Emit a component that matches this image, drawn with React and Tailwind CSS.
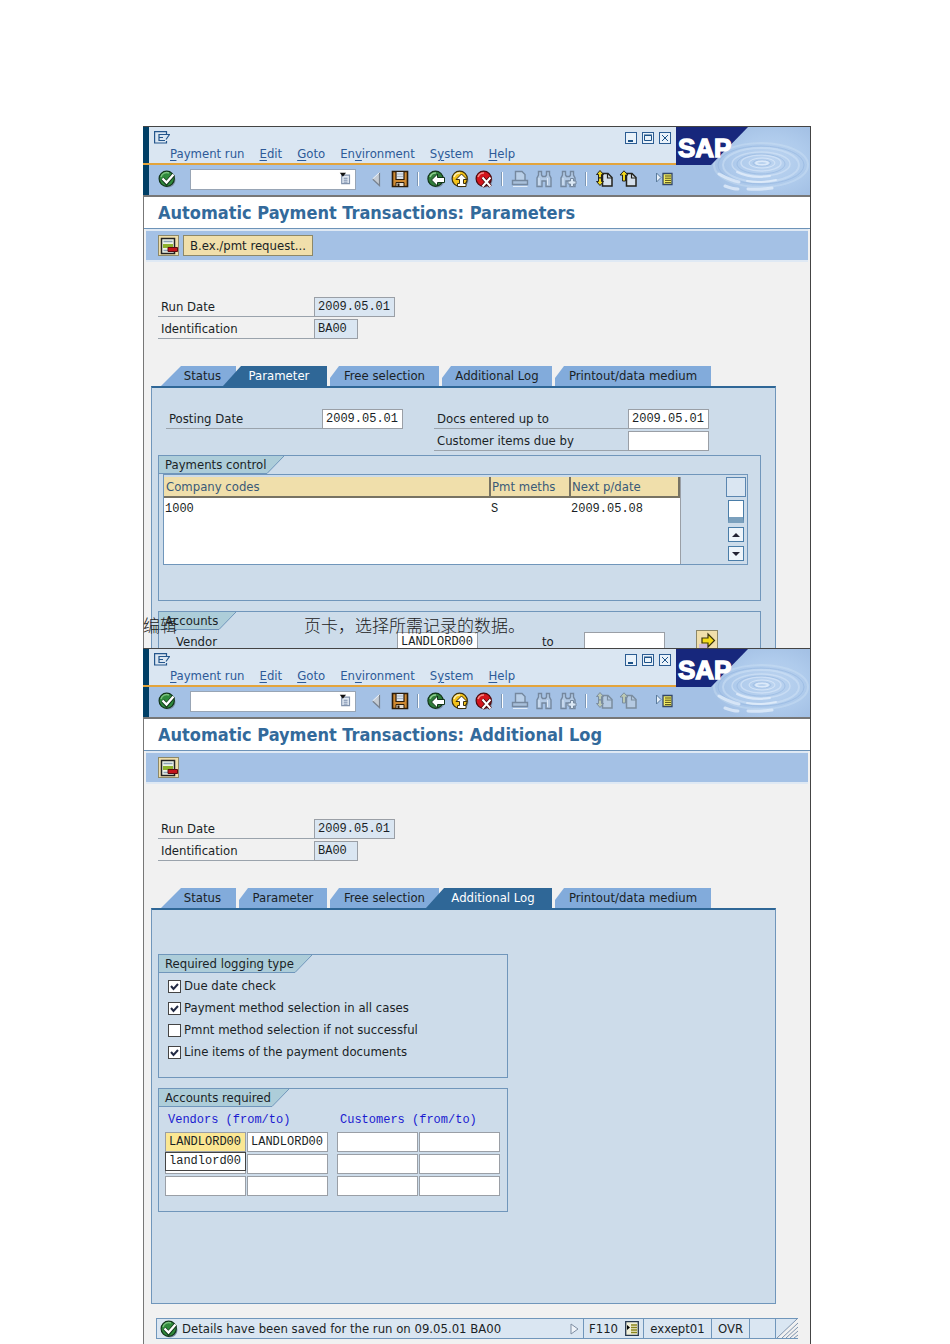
import { useState } from 'react';

const sans = 'font-["DejaVu_Sans_Condensed","DejaVu_Sans",sans-serif]';
const mono = 'font-["Liberation_Mono",monospace] text-[12px]';

const MENUS = [
    ['', 'P', 'ayment run'],
    ['', 'E', 'dit'],
    ['', 'G', 'oto'],
    ['En', 'v', 'ironment'],
    ['S', 'y', 'stem'],
    ['', 'H', 'elp'],
];

const TABS = [
    { name: 'Status', width: 'w-[75px]', activeWidth: 'w-[75px]' },
    { name: 'Parameter', width: 'w-[88px]', activeWidth: 'w-[104px]' },
    { name: 'Free selection', width: 'w-[109px]', activeWidth: 'w-[125px]' },
    { name: 'Additional Log', width: 'w-[110px]', activeWidth: 'w-[126px]' },
    { name: 'Printout/data medium', width: 'w-[156px]', activeWidth: 'w-[172px]' },
];

const Svg = ({ size = 18, className = '', children }) => (
    <svg width={size} height={size} viewBox="0 0 18 18" fill="none" className={`shrink-0 ${className}`} aria-hidden="true">
        {children}
    </svg>
);

const CheckIcon = () => (
    <Svg>
        <circle cx="10" cy="10" r="7.5" fill="#7f93ad" />
        <circle cx="8.7" cy="8.7" r="7.6" fill="#2f8a3c" stroke="#12351a" strokeWidth="1.2" />
        <path d="M3 7a6 6 0 0 1 8-4" stroke="#7cc27f" strokeWidth="1.4" />
        <path d="M4.5 8.5 8.5 13 15.5 4.5" stroke="#12351a" strokeWidth="4" />
        <path d="M4.5 8.5 8.5 12.5 15.5 4.5" stroke="#fff" strokeWidth="2.4" />
    </Svg>
);

const BackIcon = () => (
    <Svg>
        <circle cx="10" cy="10" r="7.5" fill="#7f93ad" />
        <circle cx="8.5" cy="8.7" r="7.6" fill="#2f7d3a" stroke="#12351a" strokeWidth="1.2" />
        <path d="M3 7a6 6 0 0 1 6-4" stroke="#8fd08f" strokeWidth="1.6" />
        <path d="M4.500 10 10.500 4v3.500h7v5h-7V16z" fill="#fff" stroke="#12351a" />
    </Svg>
);

const UpIcon = () => (
    <Svg>
        <circle cx="10" cy="10" r="7.5" fill="#7f93ad" />
        <circle cx="8.7" cy="8.7" r="7.6" fill="#f3c21b" stroke="#3c300c" strokeWidth="1.2" />
        <path d="M3 7a6 6 0 0 1 6-4" stroke="#fbeeb0" strokeWidth="1.6" />
        <path d="M10.500 4 16 9.500h-3.500v4H15v3H6.500v-3h2v-4H5z" fill="#fff" stroke="#3c300c" />
    </Svg>
);

const CancelIcon = () => (
    <Svg>
        <circle cx="10" cy="10" r="7.5" fill="#7f93ad" />
        <circle cx="8.7" cy="8.7" r="7.6" fill="#d3141c" stroke="#4a0a0d" strokeWidth="1.2" />
        <path d="M3 7a6 6 0 0 1 6-4" stroke="#f58a86" strokeWidth="1.6" />
        <path d="m7.500 7.500 8 9M15.500 7.500l-8 9" stroke="#4a0a0d" strokeWidth="3.6" />
        <path d="m7.500 7.500 8 9M15.500 7.500l-8 9" stroke="#fff" strokeWidth="2" />
    </Svg>
);

const SaveIcon = () => (
    <Svg>
        <path d="M1.500 1.500h15v15h-15z" fill="#cf8a33" stroke="#2b1c0b" strokeWidth="1.6" />
        <path d="M5 1.500h8v8H5z" fill="#dbe4ee" stroke="#2b1c0b" strokeWidth="1.2" />
        <path d="M6 4h6M6 6.500h6" stroke="#a9b6c4" />
        <path d="M5 12.500h8v4H5z" fill="#e8e0d4" stroke="#2b1c0b" />
        <path d="M6.500 13.500h2v2.500h-2z" fill="#2b1c0b" />
    </Svg>
);

const PrevIcon = () => (
    <Svg>
        <path d="M12.500 2.500v13l-7-6.500z" fill="#c5ccd4" />
        <path d="M12.500 2.500v13l-7-6.500" stroke="#78828f" strokeWidth="1.2" />
        <path d="m5.500 9 7-6.500" stroke="#eef3f8" />
    </Svg>
);

const PrintIcon = () => (
    <Svg>
        <path d="M4.500 10V1.500h6.500l3 3V10" fill="#b9cfe8" stroke="#75889f" strokeWidth="1.4" />
        <path d="M1.500 10.500h15v4h-15z" fill="#a9c0db" stroke="#75889f" strokeWidth="1.4" />
        <path d="M2 16.500h14.500" stroke="#e3edf8" />
    </Svg>
);

const FindIcon = ({ next }) => (
    <Svg>
        <path d="M3.500 5V1.500h3V5l1 1.500h3l1-1.500V1.500h3V5l1.500 3v8.500h-5V11h-4v5.500h-5V8z" fill="#b2c9e4" stroke="#75889f" strokeWidth="1.4" />
        <path d="M4 8v7M12.500 8v7" stroke="#dce8f6" />
        {next && <path d="M11.500 8.500h3V11H17v3h-2.500v2.500h-3V14H9v-3h2.500z" fill="#dbe8f5" stroke="#75889f" />}
    </Svg>
);

// first page: arrow pointing both ways, previous page: single arrow
const PageIcon = ({ both, disabled }) => {
    const ink = disabled ? '#7b8d9f' : '#22221c';
    const arrow = disabled ? '#bcc9b4' : '#f2d81c';
    return (
        <Svg>
            <path d="M7.500 3.500h5.500l4 4v8.500H7.500z" fill={disabled ? '#b5cae2' : '#d5e0ec'} stroke={ink} strokeWidth="1.5" />
            <path d="M12.500 3.500V8h4.500" stroke={ink} strokeWidth="1.2" />
            {both ? (
                <>
                    <path d="M5 .5 8.500 4.500h-2V8h-3V4.500h-2z" fill={arrow} stroke={ink} />
                    <path d="M5 15.500 1.500 11.500h2V8h3v3.500h2z" fill={arrow} stroke={ink} />
                </>
            ) : (
                <path d="M5 .8 9 5H6.500v6h-3V5H1z" fill={arrow} stroke={ink} />
            )}
        </Svg>
    );
};

const LayoutIcon = () => (
    <Svg>
        <path d="M1.500 3v9l4.500-4.500z" fill="#e6eff8" stroke="#5a7c9e" />
        <path d="M8 3.500h9v11H8z" fill="#f2ec62" stroke="#33476a" strokeWidth="1.3" />
        <path d="M10 6h6M10 8.200h6M10 10.400h6M10 12.600h6" stroke="#55501a" />
    </Svg>
);

const ListIcon = () => (
    <Svg size={14}>
        <path d="M3.500 4h10v11h-10z" fill="#e4ecf6" stroke="#8293ad" strokeWidth="1.500" />
        <path d="M6 8h5M6 10.500h5M6 13h5" stroke="#6f82a3" strokeWidth="1.200" />
        <path d="M1 1h8L5 6z" fill="#111" />
    </Svg>
);

const DeleteRowIcon = () => (
    <Svg>
        <path d="M1.500 1.500h13v15h-13z" fill="#eef3e8" stroke="#222" strokeWidth="1.5" />
        <path d="M3.500 4.500h9" stroke="#8ba0b5" strokeWidth="1.500" />
        <path d="M3 7h10v4H3z" fill="#8db12e" />
        <path d="M3.500 13.500h5" stroke="#8ba0b5" strokeWidth="1.500" />
        <path d="M8 10.500h9.500v4H8z" fill="#c3151b" stroke="#5e0b0e" />
    </Svg>
);

const Logo = () => (
    <svg viewBox="0 0 134 68" className="h-[68px] w-[134px] shrink-0" role="img" aria-label="SAP">
        <defs>
            <radialGradient id="glow" cx="0.6" cy="0.5" r="0.6">
                <stop offset="0" stopColor="#bcd4f0" />
                <stop offset="0.6" stopColor="#afcbec" />
                <stop offset="1" stopColor="#a4c1e5" />
            </radialGradient>
        </defs>
        <path d="M0 38h134v30H0z" fill="#a4c1e5" />
        <path d="M134 0v68H35V38L72 0z" fill="url(#glow)" />
        <g fill="none" stroke="#dceafa">
            <ellipse cx="86" cy="36" rx="6" ry="2" strokeWidth="2" />
            <ellipse cx="86" cy="36" rx="13" ry="5" opacity=".8" />
            <ellipse cx="85" cy="36" rx="20" ry="8" opacity=".6" strokeWidth="1.500" />
            <ellipse cx="85" cy="37" rx="29" ry="12" opacity=".5" strokeWidth="1.500" />
            <ellipse cx="85" cy="38" rx="38" ry="17" opacity=".4" strokeWidth="2" />
            <ellipse cx="85" cy="38" rx="47" ry="22" opacity=".3" strokeWidth="2" />
        </g>
        <g fill="none" stroke="#8fb2de" opacity=".5">
            <ellipse cx="86" cy="36" rx="9" ry="3" />
            <ellipse cx="85" cy="37" rx="24" ry="10" />
            <ellipse cx="85" cy="38" rx="43" ry="19" />
        </g>
        <g fill="none" stroke="#e6f0fc" strokeLinecap="round" opacity=".75">
            <path d="M43 47c6 3 11 6 20 8" strokeWidth="3" />
            <path d="M61 45c8 4 20 6 33 4M71 54c10 2 20 1 29-1" strokeWidth="2" />
            <path d="M49 59c5 2 8 3 13 3M72 62c10 1 16 0 24-1" strokeWidth="3" />
        </g>
        <path d="M0 0h72L35 38H0z" fill="#17277c" />
        <text x="2" y="30" fill="#fff" stroke="#fff" strokeWidth="1.4" className='font-["Liberation_Sans",sans-serif] text-[26px] font-bold'>SAP</text>
    </svg>
);

const WindowButton = ({ label, children }) => (
    <button aria-label={label} className="size-3 border border-[#2b5c92] bg-[#e9f2fa]">
        <svg viewBox="0 0 10 10" className="block size-[10px]" fill="none" stroke="#1c5288">
            {children}
        </svg>
    </button>
);

const Tool = ({ label, disabled, children }) => (
    <button aria-label={label} disabled={disabled} className="flex w-6 shrink-0 justify-center">
        {children}
    </button>
);

const Separator = () => (
    <span className="flex w-3 shrink-0 justify-center">
        <span className="h-[14px] w-[2px] border-l border-[#7d97b5] bg-white" />
    </span>
);

const Header = ({ pagesDisabled }) => (
    <header className="flex border-t border-[#444] bg-[#a4c1e5]">
        <div className="w-[6px] shrink-0 bg-[#003f66]" />
        <div className="min-w-0 flex-1">
            <div className="-ml-[6px] h-[38px] border-b-2 border-[#e3a43c] pl-[6px]">
                <div className="h-full bg-[#dae6f2] pl-[5px]">
                    <div className="flex h-[18px] items-start justify-between pt-1 pr-[5px]">
                        <svg width="16" height="14" viewBox="0 0 16 14" fill="none" stroke="#24568c" strokeWidth="1.2" aria-hidden="true">
                            <path d="M12.500 3V.600H.6v11.400h11.900V10M11 3.500H5v6h6M5 6.500h4" />
                            <path d="M10 3.500h5.500l-3.500 5" />
                        </svg>
                        <div className="flex gap-[5px] pt-[1px]">
                            <WindowButton label="Minimize"><path d="M2 8h5" strokeWidth="2" /></WindowButton>
                            <WindowButton label="Maximize"><path d="M1.500 2.500h7v5h-7zM1 2h8" /></WindowButton>
                            <WindowButton label="Close"><path d="m2 2 6 6M8 2 2 8" /></WindowButton>
                        </div>
                    </div>
                    <nav className="flex gap-[15px] pl-4 text-[#2d5a98]">
                        {MENUS.map(([before, key, after]) => (
                            <button key={key} className="leading-[18px] whitespace-nowrap">
                                {before}<span className="underline underline-offset-2">{key}</span>{after}
                            </button>
                        ))}
                    </nav>
                </div>
            </div>
            <div className="flex h-[30px] items-center pb-[2px] pl-[9px]">
                <button aria-label="Enter" className="mr-[14px]"><CheckIcon /></button>
                <div className="mr-2 flex h-[21px] w-[166px] shrink-0 items-center border border-[#98a5b5] bg-white">
                    <input aria-label="Command" className="min-w-0 flex-1 px-1 outline-none" />
                    <button aria-label="Command history" className="mr-[2px]"><ListIcon /></button>
                </div>
                <Tool label="Hide command field"><PrevIcon /></Tool>
                <Tool label="Save"><SaveIcon /></Tool>
                <Separator />
                <Tool label="Back"><BackIcon /></Tool>
                <Tool label="Exit"><UpIcon /></Tool>
                <Tool label="Cancel"><CancelIcon /></Tool>
                <Separator />
                <Tool label="Print" disabled><PrintIcon /></Tool>
                <Tool label="Find" disabled><FindIcon /></Tool>
                <Tool label="Find next" disabled><FindIcon next /></Tool>
                <Separator />
                <Tool label="First page" disabled={pagesDisabled}><PageIcon both disabled={pagesDisabled} /></Tool>
                <Tool label="Previous page" disabled={pagesDisabled}><PageIcon disabled={pagesDisabled} /></Tool>
                <span className="w-3" />
                <Tool label="Customize layout"><LayoutIcon /></Tool>
            </div>
        </div>
        <Logo />
    </header>
);

const Field = ({ label, value = '', className = 'w-[81px]', labelClass, readOnly }) => (
    <label className="flex h-5">
        <span className={`border-b border-[#9aa3ac] pl-[3px] leading-5 whitespace-nowrap ${labelClass}`}>{label}</span>
        <input
            defaultValue={value}
            readOnly={readOnly}
            className={`border border-[#9a9fa6] px-[3px] ${mono} ${readOnly ? 'bg-[#dae6f2]' : 'bg-white'} ${className}`}
        />
    </label>
);

const Tabs = ({ active }) => (
    <div role="tablist" className="flex gap-[3px] pl-[10px]">
        {TABS.map((tab, i) => {
            const on = tab.name === active;
            let shape = '[clip-path:polygon(9px_0,100%_0,100%_100%,0_100%,0_12px)]';
            if (i === 0) shape = '[clip-path:polygon(20px_0,100%_0,100%_100%,0_100%)] pl-2';
            if (on) shape = '[clip-path:polygon(18px_0,100%_0,100%_100%,0_100%)] z-10 -ml-4 pl-2';
            return (
                <button
                    key={tab.name}
                    role="tab"
                    aria-selected={on}
                    className={`relative h-5 leading-5 whitespace-nowrap ${shape} ${on ? `bg-[#2f6797] text-white ${tab.activeWidth}` : `bg-[#82abdb] ${tab.width}`}`}
                >
                    {tab.name}
                </button>
            );
        })}
    </div>
);

const Group = ({ title, className = '', children }) => (
    <section className={`border border-[#7096bb] ${className}`}>
        <div className="flex h-[18px]">
            <h2 className="border-b border-[#7096bb] bg-[#adcdd9] pl-[6px] leading-[17px] whitespace-nowrap">{title}</h2>
            <svg width="18" height="18" viewBox="0 0 18 18" aria-hidden="true">
                <path d="M0 0h18L1 17.500H0z" fill="#adcdd9" />
                <path d="M18 0 1 17.500H0" fill="none" stroke="#7096bb" />
            </svg>
        </div>
        {children}
    </section>
);

const SapWindow = ({ title, tab, actions, pagesDisabled, className = '', footer, children }) => (
    <main className={`border-r border-[#444] bg-[#f1f1f1] ${className}`}>
        <Header pagesDisabled={pagesDisabled} />
        <div className="border-t-2 border-l border-[#777]">
            <h1 className="h-[32px] border-b border-[#6d93b8] bg-white pl-[14px] text-[18px] leading-[32px] font-bold whitespace-nowrap text-[#336a9b]">{title}</h1>
            <div className="mr-[2px] ml-[2px] flex h-[33px] items-center gap-1 border-y-2 border-[#dfe9f4] bg-[#a4c1e5] pl-[12px]">
                <button aria-label="Delete" className="flex h-[21px] w-[21px] items-center justify-center border border-[#8d8868] bg-[#f0dfab]">
                    <DeleteRowIcon />
                </button>
                {actions}
            </div>
            <div className="px-[7px] pt-[35px] pb-[6px]">
                <div className="flex flex-col gap-[2px] pl-[7px]">
                    <Field label="Run Date" value="2009.05.01" labelClass="w-[156px]" readOnly />
                    <Field label="Identification" value="BA00" labelClass="w-[156px]" className="w-[44px]" readOnly />
                </div>
                <div className="mt-[27px] mr-[27px]">
                    <Tabs active={tab} />
                    <div className="border border-t-2 border-[#7096bb] border-t-[#2f6797] bg-[#cddcea]">{children}</div>
                </div>
                {footer}
            </div>
        </div>
    </main>
);

const CompanyTable = () => (
    <div className="mr-3 ml-1 flex h-[91px] justify-between border border-[#7096bb] pt-[2px]">
        <div className="border-r border-[#9a9fa6] bg-white">
            <table className="table-fixed border-collapse text-left">
                <thead>
                    <tr className="h-5 bg-[#f0dfab] text-[#3a5a78]">
                        <th className="w-[326px] border-r-2 border-b-2 border-[#777363] pl-[2px] leading-[18px] font-normal">Company codes</th>
                        <th className="w-[80px] border-r-2 border-b-2 border-[#777363] pl-[1px] leading-[18px] font-normal whitespace-nowrap">Pmt meths</th>
                        <th className="w-[109px] border-r-2 border-b-2 border-[#777363] pl-[1px] leading-[18px] font-normal">Next p/date</th>
                    </tr>
                </thead>
                <tbody className={mono}>
                    <tr className="h-[22px]">
                        <td className="pl-[1px]">1000</td>
                        <td className="pl-[1px]">S</td>
                        <td className="pl-[1px]">2009.05.08</td>
                    </tr>
                </tbody>
            </table>
        </div>
        <div className="mr-[1px] flex w-5 flex-col items-center">
            <button aria-label="Table settings" className="h-5 w-5 shrink-0 border border-[#5b86b0] bg-[#dae6f2]" />
            <div className="mt-[3px] h-[23px] w-4 shrink-0 border border-b-[6px] border-[#4a7da8] border-b-[#7ba0bd] bg-white" />
            <button aria-label="Scroll up" className="mt-1 flex h-[15px] w-4 shrink-0 items-center justify-center border border-[#4a7da8] bg-[#eef4fa]">
                <svg width="8" height="4" viewBox="0 0 8 4"><path d="M4 0 8 4H0z" fill="#223" /></svg>
            </button>
            <button aria-label="Scroll down" className="mt-1 flex h-[15px] w-4 shrink-0 items-center justify-center border border-[#4a7da8] bg-[#eef4fa]">
                <svg width="8" height="4" viewBox="0 0 8 4"><path d="M4 4 8 0H0z" fill="#223" /></svg>
            </button>
        </div>
    </div>
);

const ParametersWindow = () => (
    <SapWindow
        title="Automatic Payment Transactions: Parameters"
        tab="Parameter"
        className="h-[522px] overflow-hidden"
        actions={
            <button className="h-[21px] border border-[#8d8868] bg-[#f0dfab] px-[6px] whitespace-nowrap">B.ex./pmt request...</button>
        }
    >
        <div className="pt-[21px] pr-[14px] pl-[6px]">
            <div className="flex items-start gap-[31px] pl-2">
                <Field label="Posting Date" value="2009.05.01" labelClass="w-[156px]" />
                <div className="flex flex-col gap-[2px]">
                    <Field label="Docs entered up to" value="2009.05.01" labelClass="w-[194px]" />
                    <Field label="Customer items due by" labelClass="w-[194px]" />
                </div>
            </div>
            <Group title="Payments control" className="mt-1 h-[146px]">
                <CompanyTable />
            </Group>
            <Group title="Accounts" className="mt-[10px] h-[100px]">
                <div className="flex pt-[2px] pl-[17px]">
                    <label htmlFor="vendor-from" className="w-[221px] pt-[2px]">Vendor</label>
                    <input id="vendor-from" defaultValue="LANDLORD00" className={`h-5 w-[81px] border border-[#9a9fa6] bg-white px-[3px] ${mono}`} />
                    <label htmlFor="vendor-to" className="w-[106px] pt-[2px] pl-[64px]">to</label>
                    <input id="vendor-to" className={`h-5 w-[81px] border border-[#9a9fa6] bg-white px-[3px] ${mono}`} />
                    <button aria-label="Multiple selection" className="-mt-[2px] ml-[31px] flex h-[22px] w-[22px] items-center justify-center border border-[#8d8868] bg-[#f0dfab]">
                        <Svg>
                            <path d="M1 12h10v5H1z" fill="#cdbbdc" />
                            <path d="M4 6h6V2l6.500 6.500L10 15v-4H4z" fill="#f4dc1b" stroke="#3a340a" strokeWidth="1.2" />
                        </Svg>
                    </button>
                </div>
            </Group>
        </div>
    </SapWindow>
);

const LogOption = ({ label, initial }) => {
    const [checked, setChecked] = useState(initial);
    return (
        <label className="flex h-[14px] items-center gap-[3px] whitespace-nowrap">
            <span className="grid">
                <input
                    type="checkbox"
                    checked={checked}
                    onChange={() => setChecked(!checked)}
                    className="col-start-1 row-start-1 size-[13px] appearance-none border border-[#444] bg-white"
                />
                {checked && (
                    <svg viewBox="0 0 13 13" className="pointer-events-none col-start-1 row-start-1 size-[13px]" fill="none" stroke="#222a44" strokeWidth="2">
                        <path d="m3 6 2.500 3L10 4" />
                    </svg>
                )}
            </span>
            {label}
        </label>
    );
};

const AccountInputs = ({ title, rows, overlay }) => (
    <div className="relative">
        <h3 className={`pl-[3px] leading-[23px] whitespace-nowrap text-[#1a1ad0] ${mono}`}>{title}</h3>
        <div className="grid grid-cols-[81px_81px] gap-x-[1px] gap-y-[2px]">
            {rows.map((value, i) => (
                <input
                    key={i}
                    aria-label={`${title} ${i + 1}`}
                    defaultValue={value}
                    className={`h-5 w-full border border-[#9a9fa6] px-[3px] ${mono} ${value && i === 0 ? 'bg-[#fbe793]' : 'bg-white'}`}
                />
            ))}
        </div>
        {overlay}
    </div>
);

const StatusBar = () => (
    <footer className="mt-[14px] mr-[5px] ml-[5px] flex h-[21px] border border-r-0 border-[#7096bb] bg-[#dae6f2]">
        <div className="flex min-w-0 flex-1 items-center gap-1 pl-[3px]">
            <CheckIcon />
            <span className="flex-1 whitespace-nowrap">Details have been saved for the run on 09.05.01 BA00</span>
            <svg width="9" height="12" viewBox="0 0 9 12" className="mr-[4px]"><path d="M1 1v10l7-5z" fill="#eef3f9" stroke="#7f8ea3" /></svg>
        </div>
        <div className="flex w-[60px] items-center justify-between border-l border-[#7096bb] pr-[4px] pl-[5px]">
            F110
            <svg width="14" height="15" viewBox="0 0 14 15" fill="none" aria-hidden="true">
                <path d="M.7.7h12.600v13.600H.7z" fill="#f0efd9" stroke="#26384f" strokeWidth="1.3" />
                <path d="M2 4v5l3-2.500z" fill="#000" />
                <path d="M6 4h6M6 6.500h6M6 9h6M6 11.500h6" stroke="#8a851c" strokeWidth="1.4" />
            </svg>
        </div>
        <div className="w-[68px] border-l border-[#7096bb] text-center leading-5">exxept01</div>
        <div className="w-[38px] border-l border-[#7096bb] text-center leading-5">OVR</div>
        <div className="w-[27px] border-x border-[#7096bb]" />
        <svg width="22" height="19" viewBox="0 0 22 19" fill="none" aria-hidden="true">
            <path d="M1 19 21 0h1v19z" fill="#f1f1f1" />
            <path d="M1 19 21 0M6 19 22 4M10 19 22 8M14 19l8-7M18 19l4-3" stroke="#7f93ad" />
        </svg>
    </footer>
);

const AdditionalLogWindow = () => (
    <SapWindow
        title="Automatic Payment Transactions: Additional Log"
        tab="Additional Log"
        pagesDisabled
        footer={<StatusBar />}
    >
        <div className="flex h-[393px] flex-col items-start gap-[10px] pt-[44px] pl-[6px]">
            <Group title="Required logging type" className="h-[124px] w-[350px]">
                <div className="flex flex-col gap-2 pt-[6px] pl-[9px]">
                    <LogOption label="Due date check" initial />
                    <LogOption label="Payment method selection in all cases" initial />
                    <LogOption label="Pmnt method selection if not successful" initial={false} />
                    <LogOption label="Line items of the payment documents" initial />
                </div>
            </Group>
            <Group title="Accounts required" className="h-[124px] w-[350px]">
                <div className="flex gap-[9px] pt-[2px] pl-[6px]">
                    <AccountInputs
                        title="Vendors (from/to)"
                        rows={['LANDLORD00', 'LANDLORD00', '', '', '', '']}
                        overlay={
                            <div role="option" aria-selected="false" className={`absolute top-[43px] left-0 h-[19px] w-[81px] border border-[#444] bg-white pl-[3px] leading-[17px] ${mono}`}>
                                landlord00
                            </div>
                        }
                    />
                    <AccountInputs title="Customers (from/to)" rows={['', '', '', '', '', '']} />
                </div>
            </Group>
        </div>
    </SapWindow>
);

export default function App() {
    return (
        <div className={`bg-white pt-[126px] pr-[139px] pl-[143px] text-[13px] leading-4 text-[#1a1f26] ${sans}`}>
            <div className="relative">
                <ParametersWindow />
                <p className='absolute bottom-[11px] left-0 flex gap-[127px] font-["Noto_Sans_CJK_SC",sans-serif] text-[17px] leading-6 font-light whitespace-nowrap text-[#222]'>
                    <span>编辑</span>
                    <span>页卡，选择所需记录的数据。</span>
                </p>
            </div>
            <AdditionalLogWindow />
        </div>
    );
}
